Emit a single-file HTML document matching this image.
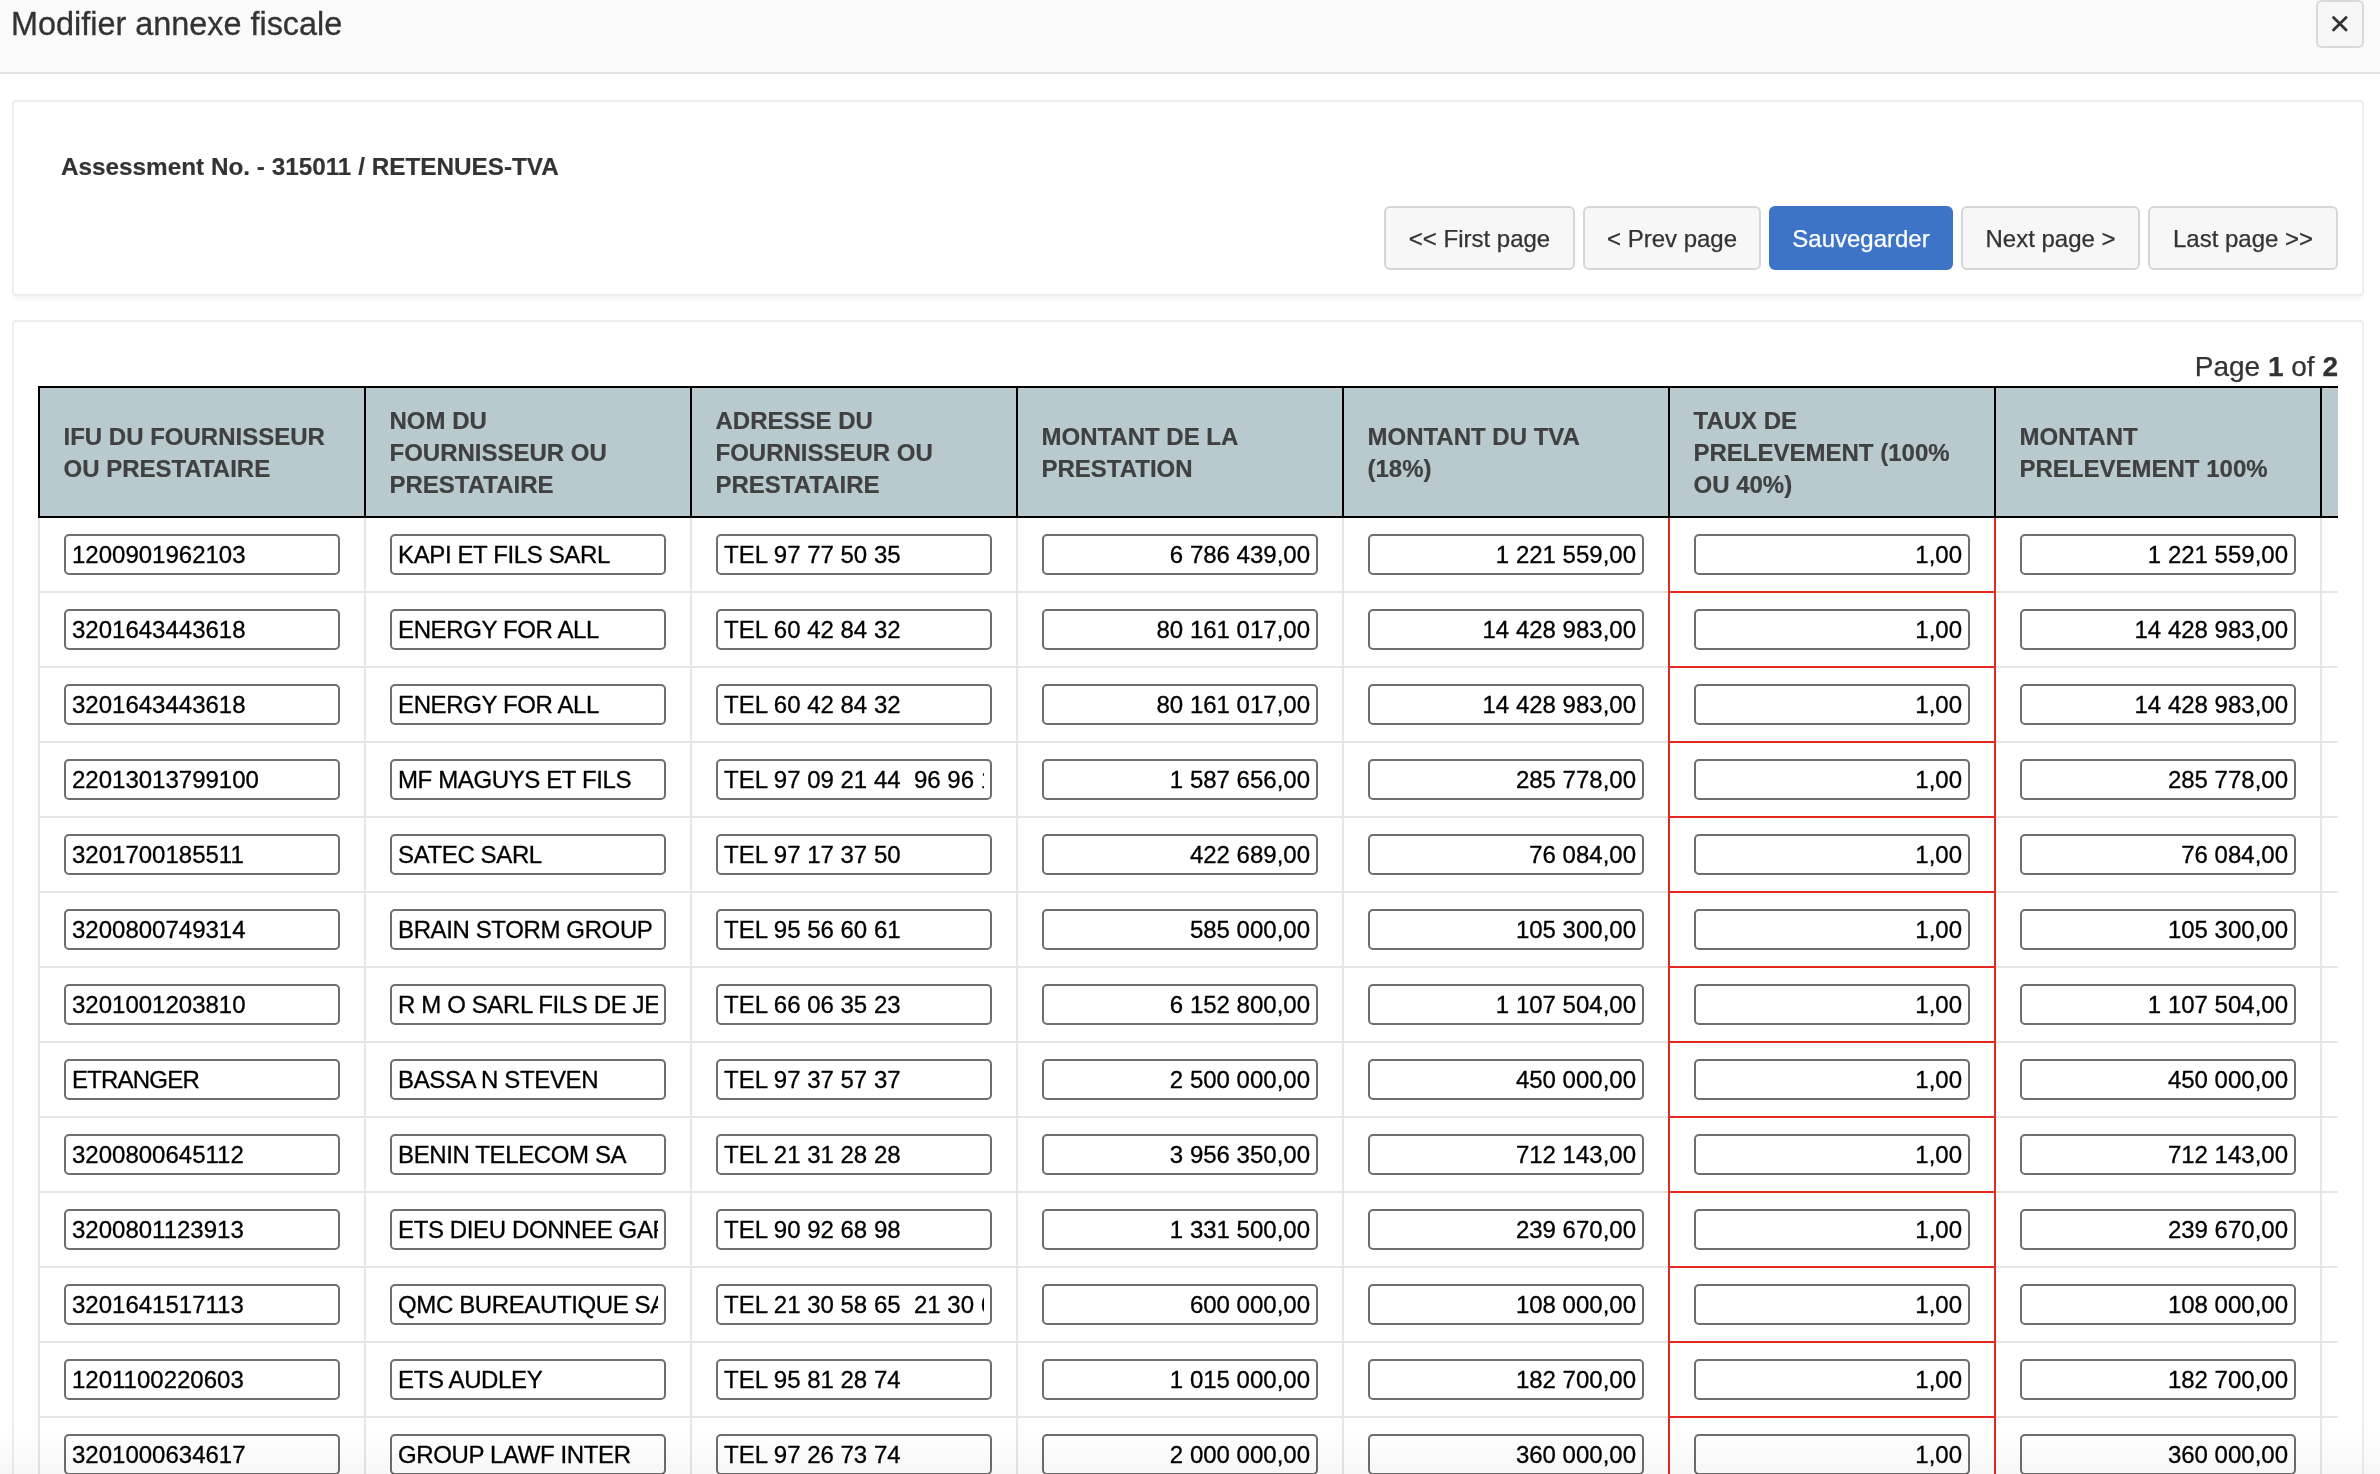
<!DOCTYPE html>
<html><head><meta charset="utf-8"><style>
html,body{margin:0;padding:0;}
body{width:2380px;height:1474px;overflow:hidden;background:#fff;position:relative;-webkit-font-smoothing:antialiased;font-family:"Liberation Sans",sans-serif;color:#333;}
.top{position:absolute;left:0;top:0;width:2380px;height:72px;background:#fafafa;border-bottom:2px solid #e3e3e3;}
.title{-webkit-text-stroke:0.3px #333;position:absolute;left:11px;top:4px;font-size:32.4px;line-height:40px;color:#333;white-space:nowrap;}
.close{position:absolute;left:2316px;top:0px;width:44px;height:44px;border:2px solid #d9d9d9;border-radius:6px;background:#f7f7f7;box-sizing:content-box;}
.panel{position:absolute;left:12px;width:2348px;border:2px solid #ededed;border-radius:4px;background:#fff;box-shadow:0 5px 4px -2px rgba(0,0,0,0.05);}
.assess{-webkit-text-stroke:0.15px #333;position:absolute;left:61px;top:151px;font-size:24.3px;line-height:32px;font-weight:bold;color:#333;white-space:nowrap;}
.btn{-webkit-text-stroke:0.25px currentColor;position:absolute;top:206px;height:60px;border:2px solid #d6d6d6;border-radius:6px;background:#f7f7f7;color:#333;font-size:24px;line-height:62px;text-align:center;white-space:nowrap;}
.btn.pri{background:#3d74c8;border-color:#3d74c8;color:#fff;}
.pageinfo{-webkit-text-stroke:0.25px #333;position:absolute;right:42px;top:347px;font-size:28px;line-height:40px;color:#333;white-space:nowrap;}
.tbl{position:absolute;left:38px;top:386px;width:2300px;height:1088px;overflow:hidden;will-change:transform;}
.hbg{position:absolute;left:0;top:0;width:2700px;height:128px;background:#b8cacd;border-top:2px solid #000;border-bottom:2px solid #000;}
.hc{-webkit-text-stroke:0.2px #404040;position:absolute;top:3px;width:276.5px;height:128px;padding:0 24px 0 25.5px;display:flex;align-items:center;font-size:24px;line-height:32px;font-weight:bold;color:#404040;white-space:nowrap;}
.vb{position:absolute;top:0;width:2px;height:132px;background:#000;}
.vg{position:absolute;top:132px;width:2px;height:1000px;background:#e6e6e6;}
.hl{position:absolute;left:0;width:2700px;height:2px;background:#e6e6e6;}
.vr{position:absolute;top:132px;width:2px;height:1000px;background:#e42a1f;z-index:2;}
.hr{position:absolute;width:328px;height:2px;background:#e42a1f;z-index:2;}
.in{position:absolute;width:272px;height:37px;border:2px solid #6e6e6e;border-radius:5px;background:#fff;overflow:hidden;font-size:24px;line-height:37px;color:#000;white-space:nowrap;}
.in span{-webkit-text-stroke:0.3px #000;position:absolute;left:6px;right:6px;top:0;bottom:0;overflow:hidden;}
.in.r span{text-align:right;}
.in.nm span{letter-spacing:-0.38px;}
.fade{position:absolute;left:0;bottom:0;width:2380px;height:46px;background:linear-gradient(rgba(0,0,0,0),rgba(0,0,0,0.03));z-index:5;}
</style></head><body><div id="root" style="position:absolute;left:0;top:0;width:2380px;height:1474px;overflow:hidden;will-change:transform;">
<div class="top"><div class="title">Modifier annexe fiscale</div>
<div class="close"><svg width="44" height="46" viewBox="0 0 44 46" style="position:absolute;left:0;top:0"><path d="M15.5 15.5 L28.1 28.1 M28.1 15.5 L15.5 28.1" stroke="#333" stroke-width="2.8" stroke-linecap="round"/></svg></div>
</div>
<div class="panel" style="top:100px;height:192px;"></div>
<div class="assess">Assessment No. - 315011 / RETENUES-TVA</div>
<div class="btn" style="left:1384px;width:187px;">&lt;&lt; First page</div>
<div class="btn" style="left:1583px;width:174px;">&lt; Prev page</div>
<div class="btn pri" style="left:1769px;width:180px;">Sauvegarder</div>
<div class="btn" style="left:1961px;width:175px;">Next page &gt;</div>
<div class="btn" style="left:2148px;width:186px;">Last page &gt;&gt;</div>
<div class="panel" style="top:320px;height:1400px;"></div>
<div class="pageinfo">Page <b>1</b> of <b>2</b></div>
<div class="tbl">
<div class="hbg"></div>
<div class="hc" style="left:0px">IFU DU FOURNISSEUR<br>OU PRESTATAIRE</div><div class="hc" style="left:326px">NOM DU<br>FOURNISSEUR OU<br>PRESTATAIRE</div><div class="hc" style="left:652px">ADRESSE DU<br>FOURNISSEUR OU<br>PRESTATAIRE</div><div class="hc" style="left:978px">MONTANT DE LA<br>PRESTATION</div><div class="hc" style="left:1304px">MONTANT DU TVA<br>(18%)</div><div class="hc" style="left:1630px">TAUX DE<br>PRELEVEMENT (100%<br>OU 40%)</div><div class="hc" style="left:1956px">MONTANT<br>PRELEVEMENT 100%</div><div class="hc" style="left:2282px"></div>
<div class="vb" style="left:0px"></div><div class="vb" style="left:326px"></div><div class="vb" style="left:652px"></div><div class="vb" style="left:978px"></div><div class="vb" style="left:1304px"></div><div class="vb" style="left:1630px"></div><div class="vb" style="left:1956px"></div><div class="vb" style="left:2282px"></div><div class="vb" style="left:2608px"></div>
<div style="position:absolute;left:0;top:0;width:2px;height:132px;background:#000"></div>
<div class="hl" style="top:205px"></div><div class="in" style="left:26px;top:148px"><span>1200901962103</span></div><div class="in nm" style="left:352px;top:148px"><span>KAPI ET FILS SARL</span></div><div class="in" style="left:678px;top:148px"><span>TEL 97 77 50 35</span></div><div class="in r" style="left:1004px;top:148px"><span>6 786 439,00</span></div><div class="in r" style="left:1330px;top:148px"><span>1 221 559,00</span></div><div class="in r" style="left:1656px;top:148px"><span>1,00</span></div><div class="in r" style="left:1982px;top:148px"><span>1 221 559,00</span></div><div class="hl" style="top:280px"></div><div class="in" style="left:26px;top:223px"><span>3201643443618</span></div><div class="in nm" style="left:352px;top:223px"><span>ENERGY FOR ALL</span></div><div class="in" style="left:678px;top:223px"><span>TEL 60 42 84 32</span></div><div class="in r" style="left:1004px;top:223px"><span>80 161 017,00</span></div><div class="in r" style="left:1330px;top:223px"><span>14 428 983,00</span></div><div class="in r" style="left:1656px;top:223px"><span>1,00</span></div><div class="in r" style="left:1982px;top:223px"><span>14 428 983,00</span></div><div class="hl" style="top:355px"></div><div class="in" style="left:26px;top:298px"><span>3201643443618</span></div><div class="in nm" style="left:352px;top:298px"><span>ENERGY FOR ALL</span></div><div class="in" style="left:678px;top:298px"><span>TEL 60 42 84 32</span></div><div class="in r" style="left:1004px;top:298px"><span>80 161 017,00</span></div><div class="in r" style="left:1330px;top:298px"><span>14 428 983,00</span></div><div class="in r" style="left:1656px;top:298px"><span>1,00</span></div><div class="in r" style="left:1982px;top:298px"><span>14 428 983,00</span></div><div class="hl" style="top:430px"></div><div class="in" style="left:26px;top:373px"><span>22013013799100</span></div><div class="in nm" style="left:352px;top:373px"><span>MF MAGUYS ET FILS</span></div><div class="in" style="left:678px;top:373px"><span>TEL 97 09 21 44&nbsp; 96 96 13 13</span></div><div class="in r" style="left:1004px;top:373px"><span>1 587 656,00</span></div><div class="in r" style="left:1330px;top:373px"><span>285 778,00</span></div><div class="in r" style="left:1656px;top:373px"><span>1,00</span></div><div class="in r" style="left:1982px;top:373px"><span>285 778,00</span></div><div class="hl" style="top:505px"></div><div class="in" style="left:26px;top:448px"><span>3201700185511</span></div><div class="in nm" style="left:352px;top:448px"><span>SATEC SARL</span></div><div class="in" style="left:678px;top:448px"><span>TEL 97 17 37 50</span></div><div class="in r" style="left:1004px;top:448px"><span>422 689,00</span></div><div class="in r" style="left:1330px;top:448px"><span>76 084,00</span></div><div class="in r" style="left:1656px;top:448px"><span>1,00</span></div><div class="in r" style="left:1982px;top:448px"><span>76 084,00</span></div><div class="hl" style="top:580px"></div><div class="in" style="left:26px;top:523px"><span>3200800749314</span></div><div class="in nm" style="left:352px;top:523px"><span>BRAIN STORM GROUP</span></div><div class="in" style="left:678px;top:523px"><span>TEL 95 56 60 61</span></div><div class="in r" style="left:1004px;top:523px"><span>585 000,00</span></div><div class="in r" style="left:1330px;top:523px"><span>105 300,00</span></div><div class="in r" style="left:1656px;top:523px"><span>1,00</span></div><div class="in r" style="left:1982px;top:523px"><span>105 300,00</span></div><div class="hl" style="top:655px"></div><div class="in" style="left:26px;top:598px"><span>3201001203810</span></div><div class="in nm" style="left:352px;top:598px"><span>R M O SARL FILS DE JESUS</span></div><div class="in" style="left:678px;top:598px"><span>TEL 66 06 35 23</span></div><div class="in r" style="left:1004px;top:598px"><span>6 152 800,00</span></div><div class="in r" style="left:1330px;top:598px"><span>1 107 504,00</span></div><div class="in r" style="left:1656px;top:598px"><span>1,00</span></div><div class="in r" style="left:1982px;top:598px"><span>1 107 504,00</span></div><div class="hl" style="top:730px"></div><div class="in" style="left:26px;top:673px"><span style="letter-spacing:-0.8px">ETRANGER</span></div><div class="in nm" style="left:352px;top:673px"><span>BASSA N STEVEN</span></div><div class="in" style="left:678px;top:673px"><span>TEL 97 37 57 37</span></div><div class="in r" style="left:1004px;top:673px"><span>2 500 000,00</span></div><div class="in r" style="left:1330px;top:673px"><span>450 000,00</span></div><div class="in r" style="left:1656px;top:673px"><span>1,00</span></div><div class="in r" style="left:1982px;top:673px"><span>450 000,00</span></div><div class="hl" style="top:805px"></div><div class="in" style="left:26px;top:748px"><span>3200800645112</span></div><div class="in nm" style="left:352px;top:748px"><span>BENIN TELECOM SA</span></div><div class="in" style="left:678px;top:748px"><span>TEL 21 31 28 28</span></div><div class="in r" style="left:1004px;top:748px"><span>3 956 350,00</span></div><div class="in r" style="left:1330px;top:748px"><span>712 143,00</span></div><div class="in r" style="left:1656px;top:748px"><span>1,00</span></div><div class="in r" style="left:1982px;top:748px"><span>712 143,00</span></div><div class="hl" style="top:880px"></div><div class="in" style="left:26px;top:823px"><span>3200801123913</span></div><div class="in nm" style="left:352px;top:823px"><span>ETS DIEU DONNEE GARAGE</span></div><div class="in" style="left:678px;top:823px"><span>TEL 90 92 68 98</span></div><div class="in r" style="left:1004px;top:823px"><span>1 331 500,00</span></div><div class="in r" style="left:1330px;top:823px"><span>239 670,00</span></div><div class="in r" style="left:1656px;top:823px"><span>1,00</span></div><div class="in r" style="left:1982px;top:823px"><span>239 670,00</span></div><div class="hl" style="top:955px"></div><div class="in" style="left:26px;top:898px"><span>3201641517113</span></div><div class="in nm" style="left:352px;top:898px"><span>QMC BUREAUTIQUE SARL</span></div><div class="in" style="left:678px;top:898px"><span>TEL 21 30 58 65&nbsp; 21 30 68 68</span></div><div class="in r" style="left:1004px;top:898px"><span>600 000,00</span></div><div class="in r" style="left:1330px;top:898px"><span>108 000,00</span></div><div class="in r" style="left:1656px;top:898px"><span>1,00</span></div><div class="in r" style="left:1982px;top:898px"><span>108 000,00</span></div><div class="hl" style="top:1030px"></div><div class="in" style="left:26px;top:973px"><span>1201100220603</span></div><div class="in nm" style="left:352px;top:973px"><span>ETS AUDLEY</span></div><div class="in" style="left:678px;top:973px"><span>TEL 95 81 28 74</span></div><div class="in r" style="left:1004px;top:973px"><span>1 015 000,00</span></div><div class="in r" style="left:1330px;top:973px"><span>182 700,00</span></div><div class="in r" style="left:1656px;top:973px"><span>1,00</span></div><div class="in r" style="left:1982px;top:973px"><span>182 700,00</span></div><div class="hl" style="top:1105px"></div><div class="in" style="left:26px;top:1048px"><span>3201000634617</span></div><div class="in nm" style="left:352px;top:1048px"><span>GROUP LAWF INTER</span></div><div class="in" style="left:678px;top:1048px"><span>TEL 97 26 73 74</span></div><div class="in r" style="left:1004px;top:1048px"><span>2 000 000,00</span></div><div class="in r" style="left:1330px;top:1048px"><span>360 000,00</span></div><div class="in r" style="left:1656px;top:1048px"><span>1,00</span></div><div class="in r" style="left:1982px;top:1048px"><span>360 000,00</span></div><div class="vg" style="left:0px"></div><div class="vg" style="left:326px"></div><div class="vg" style="left:652px"></div><div class="vg" style="left:978px"></div><div class="vg" style="left:1304px"></div><div class="vg" style="left:1630px"></div><div class="vg" style="left:1956px"></div><div class="vg" style="left:2282px"></div><div class="vg" style="left:2608px"></div><div class="vr" style="left:1630px"></div><div class="vr" style="left:1956px"></div><div class="hr" style="top:205px;left:1630px"></div><div class="hr" style="top:280px;left:1630px"></div><div class="hr" style="top:355px;left:1630px"></div><div class="hr" style="top:430px;left:1630px"></div><div class="hr" style="top:505px;left:1630px"></div><div class="hr" style="top:580px;left:1630px"></div><div class="hr" style="top:655px;left:1630px"></div><div class="hr" style="top:730px;left:1630px"></div><div class="hr" style="top:805px;left:1630px"></div><div class="hr" style="top:880px;left:1630px"></div><div class="hr" style="top:955px;left:1630px"></div><div class="hr" style="top:1030px;left:1630px"></div><div class="hr" style="top:1105px;left:1630px"></div>
</div>
<div class="fade"></div>
</div></body></html>
